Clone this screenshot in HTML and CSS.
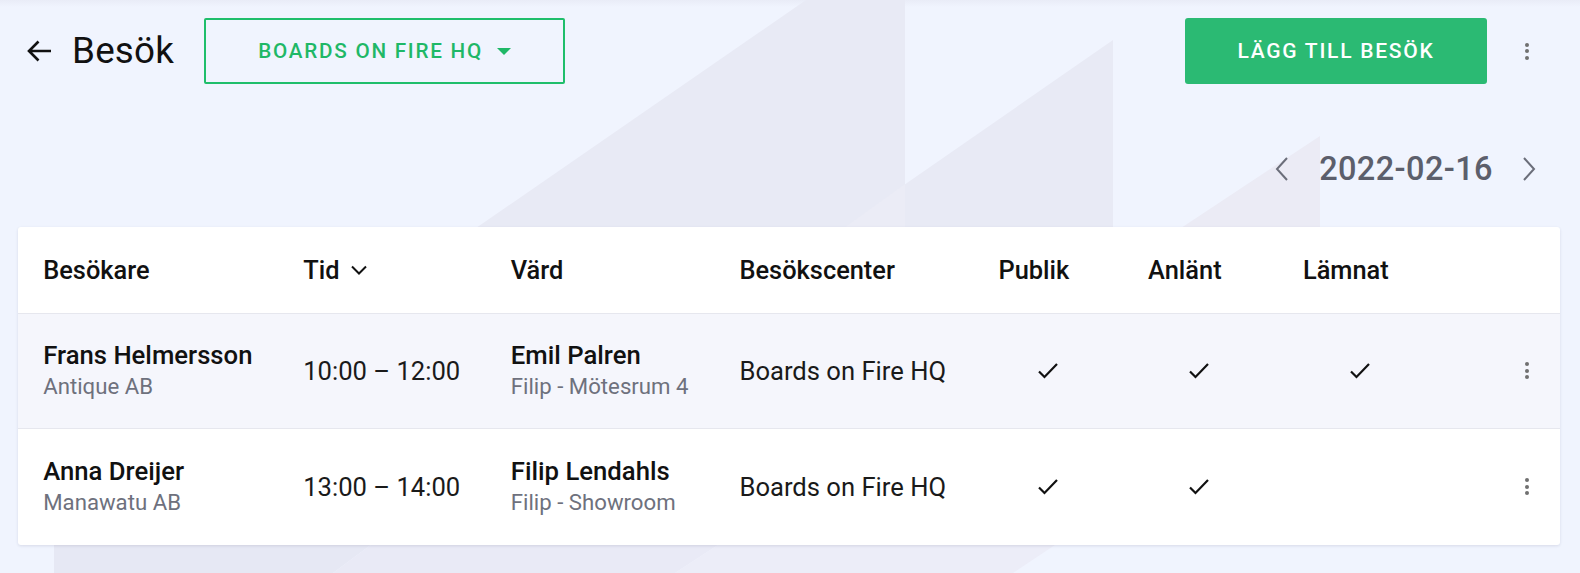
FILE: index.html
```html
<!DOCTYPE html>
<html lang="sv">
<head>
<meta charset="utf-8">
<title>Besök</title>
<link rel="stylesheet" href="styles.css">
</head>
<body>
<div class="page">
  <svg class="bg" width="1580" height="573" viewBox="0 0 1580 573" aria-hidden="true">
    <polygon points="1113,40 1113,228 842,228" fill="#e8eaf5"/>
    <polygon points="806,0 905,0 905,228 476,228" fill="#e8eaf5"/>
    <polygon points="844,228 905,228 905,184" fill="#ebecf6"/>
    <polygon points="1320,136 1320,228 1181,228" fill="#ebebf5"/>
    <polygon points="54,541 376,541 333,573 54,573" fill="#e6e8f4"/>
    <polygon points="376,541 724,541 675,573 333,573" fill="#e9eaf6"/>
    <polygon points="724,541 1061,541 1013,573 675,573" fill="#ecedf8"/>
  </svg>

  <header class="topbar">
    <a class="back" href="#">
      <svg class="back-icon" width="27" height="26" viewBox="0 0 27 26"><path d="M25 13H3.5M12.5 3.5L3 13l9.5 9.5" fill="none" stroke="#111" stroke-width="2.6"/></svg>
      <span class="title">Besök</span>
    </a>
    <button class="select">BOARDS ON FIRE HQ<span class="caret"></span></button>
    <div class="spacer"></div>
    <button class="primary">LÄGG TILL BESÖK</button>
    <button class="kebab top-kebab"><span></span><span></span><span></span></button>
  </header>

  <div class="datebar">
    <svg class="chev" width="16" height="26" viewBox="0 0 16 26"><path d="M13 2L3 13l10 11" fill="none" stroke="#6b6e7a" stroke-width="2"/></svg>
    <span class="date">2022-02-16</span>
    <svg class="chev" width="16" height="26" viewBox="0 0 16 26"><path d="M3 2l10 11L3 24" fill="none" stroke="#6b6e7a" stroke-width="2"/></svg>
  </div>

  <section class="card">
    <div class="row head">
      <div class="cell">Besökare</div>
      <div class="cell">Tid <svg class="sort" width="18" height="12" viewBox="0 0 18 12"><path d="M2 2.5l7 7 7-7" fill="none" stroke="#111" stroke-width="2"/></svg></div>
      <div class="cell">Värd</div>
      <div class="cell">Besökscenter</div>
      <div class="cell center">Publik</div>
      <div class="cell center">Anlänt</div>
      <div class="cell center">Lämnat</div>
      <div class="cell"></div>
    </div>

    <div class="row item alt">
      <div class="cell"><div class="main">Frans Helmersson</div><div class="sub">Antique AB</div></div>
      <div class="cell plain">10:00 – 12:00</div>
      <div class="cell"><div class="main">Emil Palren</div><div class="sub">Filip - Mötesrum 4</div></div>
      <div class="cell plain">Boards on Fire HQ</div>
      <div class="cell center"><svg class="check" width="22" height="18" viewBox="0 0 22 18"><path d="M2 9.5l5.5 5.5L20 2" fill="none" stroke="#111" stroke-width="2.2"/></svg></div>
      <div class="cell center"><svg class="check" width="22" height="18" viewBox="0 0 22 18"><path d="M2 9.5l5.5 5.5L20 2" fill="none" stroke="#111" stroke-width="2.2"/></svg></div>
      <div class="cell center"><svg class="check" width="22" height="18" viewBox="0 0 22 18"><path d="M2 9.5l5.5 5.5L20 2" fill="none" stroke="#111" stroke-width="2.2"/></svg></div>
      <div class="cell end"><button class="kebab"><span></span><span></span><span></span></button></div>
    </div>

    <div class="row item">
      <div class="cell"><div class="main">Anna Dreijer</div><div class="sub">Manawatu AB</div></div>
      <div class="cell plain">13:00 – 14:00</div>
      <div class="cell"><div class="main">Filip Lendahls</div><div class="sub">Filip - Showroom</div></div>
      <div class="cell plain">Boards on Fire HQ</div>
      <div class="cell center"><svg class="check" width="22" height="18" viewBox="0 0 22 18"><path d="M2 9.5l5.5 5.5L20 2" fill="none" stroke="#111" stroke-width="2.2"/></svg></div>
      <div class="cell center"><svg class="check" width="22" height="18" viewBox="0 0 22 18"><path d="M2 9.5l5.5 5.5L20 2" fill="none" stroke="#111" stroke-width="2.2"/></svg></div>
      <div class="cell center"></div>
      <div class="cell end"><button class="kebab"><span></span><span></span><span></span></button></div>
    </div>
  </section>
</div>
</body>
</html>
```

FILE: styles.css
```css
* { box-sizing: border-box; }
html, body { margin: 0; padding: 0; }
body {
  background: #f0f4fe;
  font-family: Roboto, "Liberation Sans", Arial, sans-serif;
  color: #111;
}
.page {
  position: relative;
  width: 1580px;
  height: 573px;
  overflow: hidden;
  background: linear-gradient(#e9ecf7 0, #f0f4fe 7px);
}
.bg {
  position: absolute;
  left: 0;
  top: 0;
  z-index: 0;
}
.topbar, .datebar, .card { position: relative; z-index: 1; }

.topbar {
  display: flex;
  align-items: center;
  height: 66px;
  margin-top: 18px;
  padding-left: 26px;
}
.back {
  display: flex;
  align-items: center;
  gap: 19px;
  text-decoration: none;
  color: #111;
}
.back-icon { display: block; }
.title {
  font-size: 36.8px;
  font-weight: 400;
  letter-spacing: 0.2px;
  line-height: 1;
}
.select {
  margin-left: 30px;
  width: 361px;
  height: 66px;
  border: 2px solid #1fbe6b;
  border-radius: 2px;
  background: transparent;
  color: #1fb867;
  font-family: inherit;
  font-size: 20.7px;
  font-weight: 500;
  letter-spacing: 1.75px;
  display: flex;
  align-items: center;
  justify-content: center;
  padding: 0;
}
.caret {
  width: 0;
  height: 0;
  border-left: 7px solid transparent;
  border-right: 7px solid transparent;
  border-top: 7px solid #1fb867;
  margin-left: 14px;
}
.spacer { flex: 1; }
.primary {
  width: 302px;
  height: 66px;
  border: 0;
  border-radius: 3px;
  background: #2bba73;
  color: #fff;
  font-family: inherit;
  font-size: 21px;
  font-weight: 500;
  letter-spacing: 1.75px;
  padding: 0;
}
.kebab {
  width: 16px;
  height: 22px;
  border: 0;
  padding: 0;
  background: transparent;
  display: flex;
  flex-direction: column;
  align-items: center;
  justify-content: center;
  gap: 2.5px;
}
.kebab span {
  width: 4px;
  height: 4px;
  border-radius: 50%;
  background: #707070;
}
.top-kebab { margin-left: 31.5px; margin-right: 45.5px; }

.datebar {
  display: flex;
  align-items: center;
  justify-content: flex-end;
  height: 54px;
  margin-top: 58px;
  padding-right: 43px;
}
.chev { display: block; }
.date {
  font-size: 32.5px;
  font-weight: 500;
  color: #5c5f6c;
  margin: 0 28px 0 29px;
  letter-spacing: 0.4px;
}

.card {
  margin: 31px 20px 0 18px;
  background: #fff;
  border-radius: 3px;
  box-shadow: 0 1px 3px rgba(40, 44, 80, 0.12);
  overflow: hidden;
}
.row {
  display: grid;
  grid-template-columns: 260px 207.6px 228.7px 238.4px 140px 162px 160px 1fr;
  padding-left: 25.2px;
  align-items: center;
}
.head {
  height: 86.7px;
  border-bottom: 1px solid #e6e7ee;
  font-size: 25.4px;
  font-weight: 500;
}
.head .cell { display: flex; align-items: center; }
.head .center { justify-content: center; padding-right: 28px; }
.sort { margin-left: 11px; display: block; }
.item {
  height: 115.5px;
}
.item.alt {
  background: #f5f6fc;
  border-bottom: 1px solid #e6e7ee;
}
.main {
  font-size: 25.7px;
  font-weight: 500;
  line-height: 31px;
}
.sub {
  font-size: 22.2px;
  color: #6e717d;
  line-height: 29px;
  margin-top: 1px;
}
.plain {
  font-size: 25.6px;
  font-weight: 400;
  color: #1a1a1a;
}
.cell.center { display: flex; justify-content: center; }
.cell.end { display: flex; justify-content: flex-end; padding-right: 25px; }
.check { display: block; }
```
